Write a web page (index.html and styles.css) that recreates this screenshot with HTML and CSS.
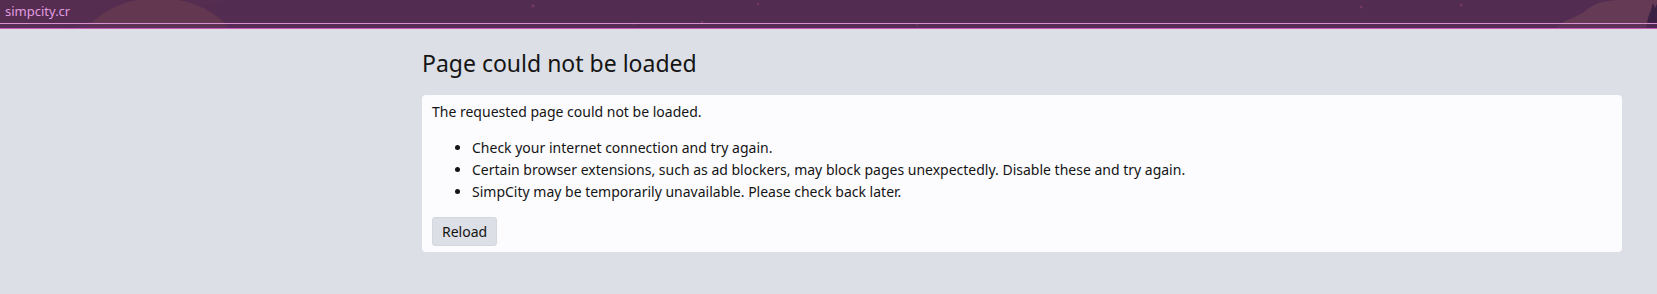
FILE: index.html
```html
<!DOCTYPE html>
<html lang="en">
<head>
    <meta charset="UTF-8">
    <meta name="viewport" content="width=device-width, initial-scale=1.0">
    <title>Page could not be loaded</title>
    <link rel="stylesheet" href="styles.css">
</head>
<body>
    <header class="site-header">
        <!-- background artwork, sits behind the header lines -->
        <svg class="header-art" width="1657" height="29" viewBox="0 0 1657 29" preserveAspectRatio="none">
            <path d="M0 0 L240 0 L60 29 L0 29 Z" fill="#56304f" opacity="0.35"/>
            <ellipse cx="158" cy="62" rx="84" ry="64" fill="#63374f"/>
            <ellipse cx="95" cy="40" rx="30" ry="18" fill="#67395a" opacity="0.7"/>
            <path d="M1555 29 C1562 20 1575 18 1584 12 C1592 4 1604 0 1620 0 L1657 0 L1657 29 Z" fill="#643a55"/>
            <path d="M1646 29 L1648 18 L1651 10 L1653 3 L1655 8 L1657 4 L1657 29 Z" fill="#3a2042"/>
            <circle cx="533" cy="6" r="1.6" fill="#74376a"/>
            <circle cx="758" cy="4" r="1.3" fill="#74376a"/>
            <circle cx="1361" cy="7" r="1.5" fill="#74376a"/>
            <circle cx="1461" cy="5" r="1.5" fill="#74376a"/>
            <circle cx="634" cy="24" r="1.4" fill="#74376a"/>
            <circle cx="702" cy="22" r="1.2" fill="#74376a"/>
            <circle cx="917" cy="25" r="1.3" fill="#74376a"/>
        </svg>
        <div class="header-top">
            <span class="brand">simpcity.cr</span>
        </div>
        <div class="header-strip"></div>
    </header>

    <main class="page">
        <h1 class="page-title">Page could not be loaded</h1>
        <div class="block">
            <p>The requested page could not be loaded.</p>
            <ul>
                <li>Check your internet connection and try again.</li>
                <li>Certain browser extensions, such as ad blockers, may block pages unexpectedly. Disable these and try again.</li>
                <li>SimpCity may be temporarily unavailable. Please check back later.</li>
            </ul>
            <button class="button">Reload</button>
        </div>
    </main>
</body>
</html>
```

FILE: styles.css
```css
body {
    margin: 0;
    padding: 0;
    background-color: #dcdfe5;
    font-family: "Noto Sans", sans-serif;
    color: #141414;
}

.site-header {
    position: relative;
    background-color: #532c51;
    overflow: hidden;
}

.header-art {
    position: absolute;
    top: 0;
    left: 0;
    width: 100%;
    height: 29px;
}

.header-top {
    position: relative;
    height: 23px;
    border-bottom: 1px solid #d792cf;
    display: flex;
    align-items: center;
    padding-left: 5px;
}

.brand {
    color: #e39be0;
    font-size: 13px;
    line-height: 1;
}

.header-strip {
    position: relative;
    height: 4px;
    background-color: rgba(90, 44, 92, 0.6);
    border-bottom: 1px solid #c559b4;
}

.page {
    padding: 20px 35px 40px 422px;
}

.page-title {
    font-size: 23px;
    font-weight: 400;
    line-height: 28px;
    margin: 0 0 18px;
}

.block {
    background-color: #fcfcff;
    border-radius: 4px;
    padding: 6px 10px 6px;
    font-size: 14px;
    line-height: 22px;
}

.block p {
    margin: 0 0 14px;
}

.block ul {
    margin: 0 0 14px;
    padding-left: 40px;
}

.button {
    display: block;
    font-family: inherit;
    font-size: 14px;
    background-color: #dcdfe5;
    border: 1px solid #d3d7de;
    border-radius: 3px;
    padding: 4px 9px;
    color: #141414;
    cursor: pointer;
}
```
